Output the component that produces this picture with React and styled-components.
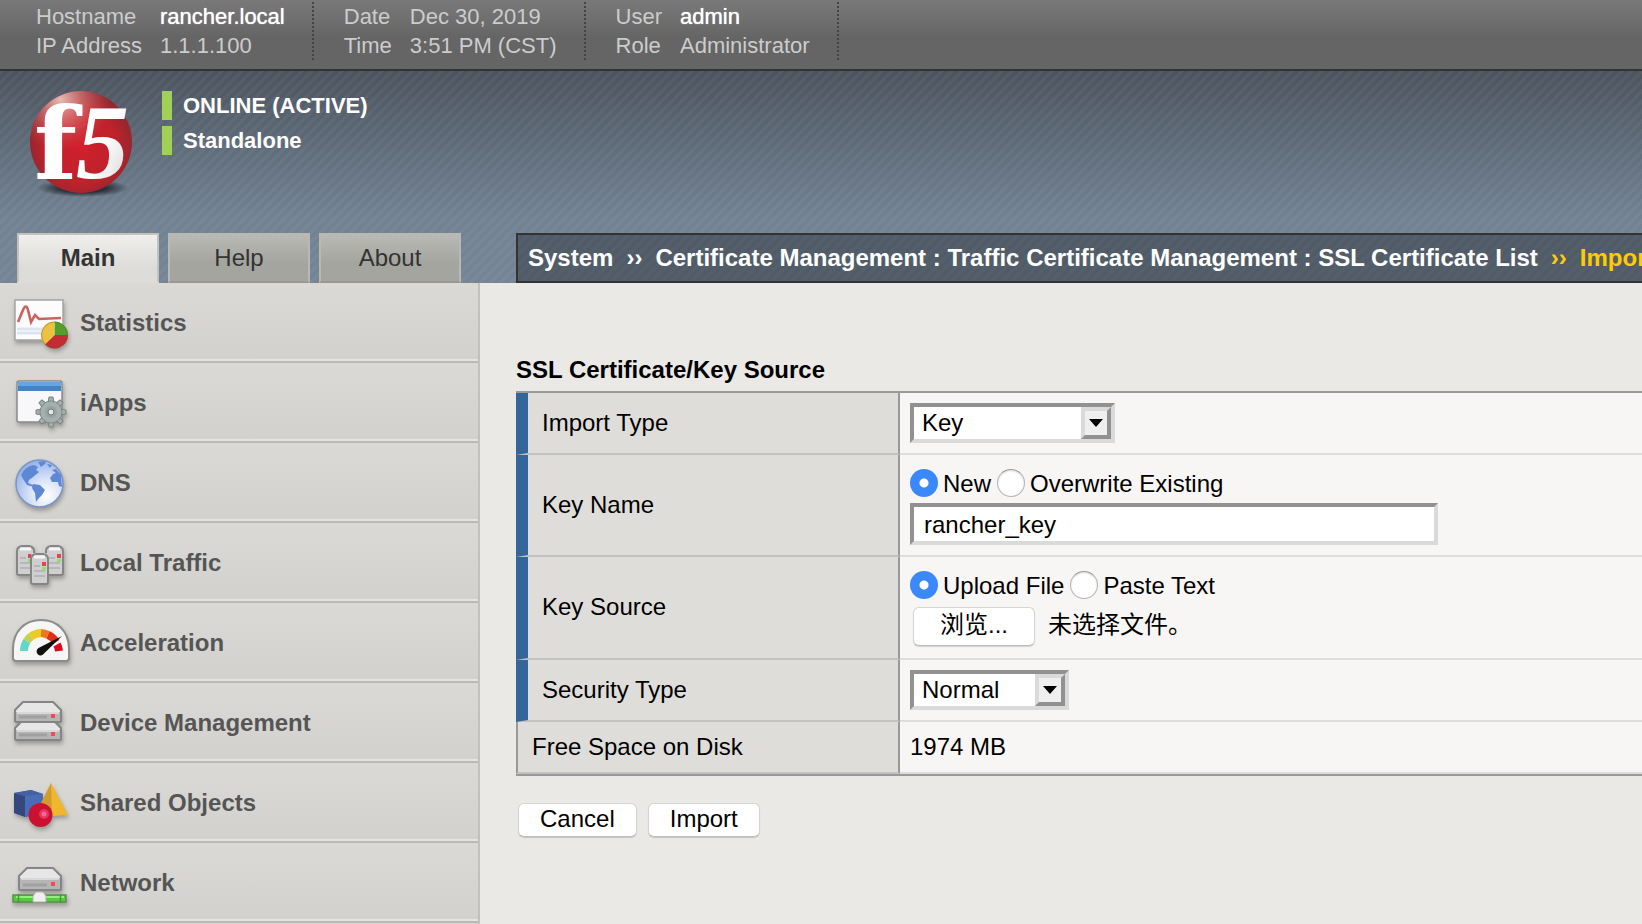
import React, { useRef, useState } from "react";
import styled, { createGlobalStyle, css } from "styled-components";

const GlobalStyle = createGlobalStyle`
  * { box-sizing: border-box; }
  body {
    margin: 0;
    background: #eae9e5;
    color: #000;
    font-family: "Liberation Sans", Arial, "Noto Sans CJK SC", sans-serif;
    font-size: 24px;
    line-height: 27px;
  }
  button, input, select { font: inherit; color: inherit; margin: 0; }
`;

const Page = styled.div`
  min-height: 100vh;
  display: flex;
  flex-direction: column;
  overflow: hidden;
`;

/* ---------- Top information bar ---------- */

const InfoBar = styled.div`
  display: flex;
  padding: 2px 0 9px 6px;
  border-bottom: 2px solid #333;
  background: linear-gradient(#797979, #656565 55%, #656565);
  color: #ccc;
  font-size: 22px;
  line-height: 29px;
  white-space: nowrap;
`;

const InfoGroup = styled.dl`
  display: grid;
  grid-template-columns: auto auto;
  column-gap: 18px;
  margin: 0;
  padding: 0 29px 0 30px;
  background: repeating-linear-gradient(#444 0 2px, transparent 2px 4px) right top / 2px 100% no-repeat;
`;

const InfoTerm = styled.dt``;

const InfoValue = styled.dd`
  margin: 0;
  ${(p) => p.$strong && css`
    color: #fff;
    text-shadow: 0 0 1px #fff;
  `}
`;

/* ---------- Banner ---------- */

const Banner = styled.header`
  background:
    linear-gradient(135deg, rgba(255, 255, 255, 0.04) 25%, transparent 25% 50%, rgba(255, 255, 255, 0.04) 50% 75%, transparent 75%) 0 0 / 10px 10px,
    linear-gradient(#4b545e, #728293 70%, #748495);
`;

const Identity = styled.div`
  display: flex;
  align-items: flex-start;
  gap: 22px;
  height: 162px;
  padding: 20px 0 0 22px;
`;

const StatusList = styled.ul`
  display: grid;
  gap: 6px;
  margin: 0;
  padding: 0;
  list-style: none;
`;

const Status = styled.li`
  padding-left: 11px;
  border-left: 10px solid #a0d055;
  color: #fff;
  font-size: 22px;
  font-weight: bold;
  line-height: 29px;
`;

const TitleRow = styled.div`
  display: flex;
  height: 50px;
`;

const Tabs = styled.nav`
  display: flex;
  flex: none;
  gap: 9px;
  width: 516px;
  padding-left: 17px;
`;

const Tab = styled.button`
  width: 142px;
  padding: 0 0 2px;
  border: 2px solid #b8b8b5;
  border-bottom-color: #999994;
  background: linear-gradient(#b9b9b5, #a5a5a0 60%);
  color: #333;
  ${(p) => p.$active && css`
    border-color: #c3c2bf;
    border-bottom-color: #dddcd8;
    background: linear-gradient(#f0efed, #dddcd8 70%);
    font-weight: bold;
  `}
`;

const Breadcrumb = styled.nav`
  display: flex;
  align-items: center;
  flex: 1;
  gap: 13px;
  min-width: 0;
  padding: 0 0 2px 10px;
  border: 2px solid #333;
  border-right: 0;
  overflow: hidden;
  background: rgba(0, 0, 0, 0.3);
  color: #fff;
  font-weight: bold;
  white-space: nowrap;
`;

const Crumb = styled.span`
  color: ${(p) => (p.$current ? "#fc0" : "#fff")};
`;

/* ---------- Side navigation ---------- */

const Body = styled.div`
  display: flex;
  flex: 1;
`;

const SideNav = styled.nav`
  flex: none;
  width: 480px;
  border-right: 2px solid #c2c1be;
  background: #dad9d5;
`;

const NavItem = styled.a`
  display: flex;
  align-items: flex-start;
  height: 80px;
  border-bottom: 2px solid #b9b9b7;
  box-shadow: inset 0 -2px #e4e3e0;
  background: linear-gradient(#dad9d5, #d2d1cd);
  color: #555;
  font-weight: bold;
  text-decoration: none;
`;

const NavLabel = styled.span`
  padding-top: 26px;
`;

const NavIcon = styled.svg`
  flex: none;
  width: 80px;
  height: 76px;
  filter: drop-shadow(1px 3px 2px rgba(0, 0, 0, 0.28));
`;

/* ---------- Form ---------- */

const Main = styled.main`
  flex: 1;
  min-width: 0;
  padding: 73px 0 32px 36px;
`;

const SectionTitle = styled.h2`
  margin: 0 0 8px;
  font-size: 24px;
  line-height: 27px;
`;

const FormTable = styled.table`
  width: 100%;
  border-top: 2px solid #999;
  border-bottom: 2px solid #999;
  border-spacing: 0;
`;

const HeadCell = styled.th`
  width: 384px;
  padding: 9px 14px 11px;
  border-left: ${(p) => (p.$plain ? "2px solid #999" : "12px solid #369")};
  border-right: 2px solid #999;
  border-bottom: 2px solid #c3c2be;
  background: #dedddA;
  font-weight: normal;
  text-align: left;
`;

const ValueCell = styled.td`
  height: ${(p) => (p.$plain ? 52 : 62)}px;
  padding: ${(p) => (p.$plain ? "0 10px 2px" : "10px")};
  border-bottom: 2px solid #dddddb;
  background: #f7f6f4;
`;

const sunken = css`
  border: 4px solid;
  border-color: #919191 #dadada #dadada #919191;
  background: #fff;
`;

const SelectBox = styled.span`
  ${sunken}
  display: grid;
  width: ${(p) => p.$width}px;
  height: 40px;
`;

const NativeSelect = styled.select`
  grid-area: 1 / 1;
  width: 100%;
  padding: 0 30px 2px 8px;
  border: 0;
  border-radius: 0;
  outline: 0;
  background: #fff;
  appearance: none;
`;

const SelectArrow = styled.span`
  grid-area: 1 / 1;
  display: grid;
  place-items: center;
  justify-self: end;
  width: 30px;
  border: 4px solid;
  border-color: #dadada #919191 #919191 #dadada;
  background: #efefef;
  pointer-events: none;
`;

const TextInput = styled.input`
  ${sunken}
  display: block;
  width: 528px;
  height: 42px;
  padding: 2px 10px 0;
  outline: 0;
`;

const RadioRow = styled.div`
  display: flex;
  gap: 6px;
  height: 36px;
  margin-bottom: 2px;
`;

const RadioLabel = styled.label`
  display: flex;
  align-items: center;
  gap: 5px;
`;

const Radio = styled.input`
  width: 28px;
  height: 28px;
  border: 1px solid #b5b5b5;
  border-top-color: #999;
  border-radius: 50%;
  background: #fff;
  box-shadow: inset 0 1px 2px rgba(0, 0, 0, 0.15);
  appearance: none;
  &:checked {
    border: 0;
    background: radial-gradient(circle, #fff 0 4px, #3b88fd 5px);
    box-shadow: none;
  }
`;

const FileRow = styled.div`
  display: flex;
  align-items: center;
  gap: 13px;
  height: 43px;
  padding-left: 3px;
`;

const PushButton = styled.button`
  height: ${(p) => (p.$tall ? 39 : 34)}px;
  padding: ${(p) => (p.$tall ? "0 26px 4px" : "0 21px 4px")};
  border: 1px solid #d4d4d2;
  border-bottom-color: #bdbdbb;
  border-radius: 6px;
  background: #fff;
  box-shadow: 0 1px 1px rgba(0, 0, 0, 0.15);
  white-space: nowrap;
`;

const FileStatus = styled.span`
  padding-bottom: 4px;
`;

const Actions = styled.div`
  display: flex;
  gap: 11px;
  padding: 27px 0 0 2px;
`;

/* ---------- Drawings ---------- */

const F5Logo = () => (
  <svg width="118" height="112" viewBox="22 91 118 112" overflow="visible" role="img" aria-label="f5">
    <defs>
      <radialGradient id="ball" cx="0.5" cy="0.55" r="0.6">
        <stop offset="0" stopColor="#d0202c" />
        <stop offset="0.6" stopColor="#bd222c" />
        <stop offset="1" stopColor="#7c2a30" />
      </radialGradient>
      <radialGradient id="shine" cx="0.3" cy="0.08" r="0.5">
        <stop offset="0" stopColor="#f6d5cc" stopOpacity="0.85" />
        <stop offset="1" stopColor="#e06060" stopOpacity="0" />
      </radialGradient>
      <radialGradient id="ground">
        <stop offset="0.5" stopColor="#1d2228" stopOpacity="0.85" />
        <stop offset="1" stopColor="#1d2228" stopOpacity="0" />
      </radialGradient>
      <linearGradient id="letter" x1="0" y1="0" x2="1" y2="1">
        <stop offset="0.5" stopColor="#fff" />
        <stop offset="1" stopColor="#cfcfcf" />
      </linearGradient>
    </defs>
    <ellipse cx="83" cy="188" rx="46" ry="9" fill="url(#ground)" />
    <circle cx="81" cy="142" r="51" fill="url(#ball)" />
    <circle cx="81" cy="142" r="51" fill="url(#shine)" />
    <text x="34" y="179" fontFamily="DejaVu Serif" fontWeight="bold" fontSize="100" fill="#fff">f</text>
    <text x="76" y="178" fontFamily="Liberation Serif" fontWeight="bold" fontStyle="italic" fontSize="106" fill="url(#letter)">5</text>
  </svg>
);

const ArrowDown = () => (
  <svg width="14" height="8" viewBox="0 0 14 8" aria-hidden="true">
    <path d="M0 0h14L7 8z" fill="#000" />
  </svg>
);

const StatisticsIcon = () => (
  <NavIcon viewBox="0 0 80 76" aria-hidden="true">
    <rect x="15" y="17" width="48" height="40" fill="#fcfcfc" stroke="#a5a5a5" strokeWidth="1.5" />
    <path d="M17 46h44M17 50h44" stroke="#dbe5ef" strokeWidth="3" />
    <path d="M18 39l5-12q3-7 5 0l3 12 4-7 4 4 22-1" fill="none" stroke="#cc6260" strokeWidth="2.6" />
    <path d="M54.500 52V38.500A13.500 13.500 0 0 1 68 52z" fill="#4fa02c" />
    <path d="M54.500 52H68A13.500 13.500 0 0 1 45 61.500z" fill="#c42c34" />
    <path d="M54.500 52L45 61.500A13.500 13.500 0 0 1 54.500 38.500z" fill="#ecc040" />
    <circle cx="54.500" cy="52" r="13" fill="none" stroke="#6d5a20" strokeOpacity="0.4" />
  </NavIcon>
);

const gearTeeth = [0, 45, 90, 135, 180, 225, 270, 315];

const IAppsIcon = () => (
  <NavIcon viewBox="0 0 80 76" aria-hidden="true">
    <rect x="17" y="18" width="45" height="41" rx="2" fill="#f8f8fa" stroke="#8b8b8b" strokeWidth="1.5" />
    <path d="M18 19h43v9H18z" fill="#4384c8" />
    <path d="M18 19h43v4H18z" fill="#68a5e0" />
    <g fill="#a5afad" stroke="#7b8583" strokeWidth="1">
      {gearTeeth.map((a) => (
        <path key={a} d="M48 40l1-6h4l1 6z" transform={`rotate(${a} 51 49)`} />
      ))}
      <circle cx="51" cy="49" r="11" />
    </g>
    <circle cx="51" cy="49" r="10.400" fill="#a5afad" />
    <circle cx="51" cy="49" r="6" fill="#98a3a1" />
    <circle cx="51" cy="49" r="3" fill="#e4e5e2" stroke="#707b79" />
  </NavIcon>
);

const DnsIcon = () => (
  <NavIcon viewBox="0 0 80 76" aria-hidden="true">
    <defs>
      <radialGradient id="sea" cx="0.65" cy="0.75" r="0.75">
        <stop offset="0" stopColor="#fff" />
        <stop offset="0.5" stopColor="#d5e0f8" />
        <stop offset="1" stopColor="#98b5ea" />
      </radialGradient>
    </defs>
    <circle cx="39.500" cy="40.500" r="23.500" fill="url(#sea)" stroke="#7d94c4" strokeWidth="1.500" />
    <g fill="#5f88d4">
      <path d="M21 32q4-9 13-10l4 2-2 3 3 2-6 5-4 3-1 3 5 2 1 2-7-2-4-6z" />
      <path d="M38 19l6-1 2 2-5 4zM47 21l5 1-2 3z" />
      <path d="M33 41l7 1 5 5-3 5-3 3-3 4-1-9-3-5z" />
      <path d="M52 27l4-1 5 6 1 12-3-1-1-4-6 0-2-4 3-4 3-1z" />
    </g>
  </NavIcon>
);

const Tower = ({ x, y, w, h }) => (
  <g>
    <rect x={x} y={y} width={w} height={h} rx="3" fill="#d0d0d0" />
    <path
      d={`M${x} ${y + 6}q0-4 5-5h${w - 10}q5 1 5 5v${h - 8}q0 2-2 2h${4 - w}q-2 0-2-2z`}
      fill="#cfcfcf" stroke="#858585" strokeWidth="2"
    />
    <path d={`M${x + 3} ${y + 4}h${w - 6}`} stroke="#f4f4f4" strokeWidth="3" />
    <path d={`M${x + 3} ${y + 13}h6M${x + 3} ${y + 18}h11M${x + 3} ${y + 23}h11`} stroke="#b0b0b0" strokeWidth="1.500" />
    <rect x={x + w - 6} y={y + 9} width="4" height="4" fill="#e8404c" />
    <rect x={x + w - 6} y={y + 14} width="4" height="3" fill="#8edf6c" />
  </g>
);

const LocalTrafficIcon = () => (
  <NavIcon viewBox="0 0 80 76" aria-hidden="true">
    <Tower x={17} y={22} w={17} h={30} />
    <Tower x={46} y={22} w={17} h={30} />
    <Tower x={31} y={30} w={17} h={31} />
  </NavIcon>
);

const AccelerationIcon = () => (
  <NavIcon viewBox="0 0 80 76" aria-hidden="true">
    <path d="M13 56V46C13 28 25 17 41 17s28 11 28 29v10l-2 2H15z" fill="#f6f6f4" stroke="#8c8c8c" strokeWidth="2" />
    <g fill="none" strokeWidth="8">
      <path d="M24 48A17.500 17.500 0 0 1 27 38" stroke="#65d5c8" />
      <path d="M27 38A17.500 17.500 0 0 1 31 33.500" stroke="#c8d050" />
      <path d="M31 33.500A17.500 17.500 0 0 1 41 30" stroke="#edcb22" />
      <path d="M41 30A17.500 17.500 0 0 1 48 31.800" stroke="#ea7a20" />
      <path d="M48 31.800A17.500 17.500 0 0 1 56 39" stroke="#e03018" />
      <path d="M57 41.500A17.500 17.500 0 0 1 59 48" stroke="#e00820" />
    </g>
    <path d="M38.500 45L62 33 44 50.500a4 4 0 1 1-5.500-5.500z" fill="#111" />
  </NavIcon>
);

const Server = ({ x, y, w, h }) => (
  <g>
    <path
      d={`M${x} ${y + 8}l8-8h${w - 16}l8 8v${h - 9}l-1 1h${2 - w}l-1-1z`}
      fill="#e6e6e6" stroke="#858585" strokeWidth="2" strokeLinejoin="round"
    />
    <path d={`M${x + 1} ${y + 10}h${w - 2}v${h - 11}h${2 - w}z`} fill="#b5b5b5" />
    <path d={`M${x + 2} ${y + 11}h${w - 4}`} stroke="#d8d8d8" strokeWidth="2" />
    <path d={`M${x + 4} ${y + h - 5}h${w - 18}`} stroke="#a0a0a0" strokeWidth="3" />
    <rect x={x + w - 10} y={y + h - 8} width="4" height="4" fill="#ef4b55" />
  </g>
);

const DeviceIcon = () => (
  <NavIcon viewBox="0 0 80 76" aria-hidden="true">
    <Server x={15} y={37} w={46} h={20} />
    <Server x={15} y={19} w={46} h={20} />
  </NavIcon>
);

const SharedObjectsIcon = () => (
  <NavIcon viewBox="0 0 80 76" aria-hidden="true">
    <path d="M14 30l17-3 12 4v19L26 54l-12-4z" fill="#4a6cb4" />
    <path d="M14 30l11 3v21l-11-4z" fill="#35487e" />
    <path d="M14 30l17-3 12 4-18 2z" fill="#4560a0" />
    <path d="M51 20l17 32-16 1-9-12z" fill="#f0b72e" />
    <path d="M51 20l1 33-10-4-1-9z" fill="#d29c2c" />
    <circle cx="40.500" cy="52" r="12" fill="#cc1030" />
    <circle cx="44" cy="51" r="5" fill="#e23560" />
    <circle cx="44" cy="51" r="2.500" fill="#f06a94" />
  </NavIcon>
);

const NetworkIcon = () => (
  <NavIcon viewBox="0 0 80 76" aria-hidden="true">
    <path d="M13 52h53v7H13z" fill="#52cc38" stroke="#5d8f52" strokeWidth="1.500" />
    <path d="M16 54h48" stroke="#8ff07a" strokeWidth="2" />
    <path d="M18.500 51v9M60.500 51v9" stroke="#4f9443" strokeWidth="1.500" />
    <path d="M33 59v-6l3-4h7l3 4v6z" fill="#efefef" stroke="#b0b0b0" />
    <Server x={19} y={25} w={42} h={22} />
  </NavIcon>
);

const navItems = [
  ["Statistics", StatisticsIcon],
  ["iApps", IAppsIcon],
  ["DNS", DnsIcon],
  ["Local Traffic", LocalTrafficIcon],
  ["Acceleration", AccelerationIcon],
  ["Device Management", DeviceIcon],
  ["Shared Objects", SharedObjectsIcon],
  ["Network", NetworkIcon],
];

const infoGroups = [
  [["Hostname", "rancher.local", true], ["IP Address", "1.1.1.100"]],
  [["Date", "Dec 30, 2019"], ["Time", "3:51 PM (CST)"]],
  [["User", "admin", true], ["Role", "Administrator"]],
];

const Dropdown = ({ id, width, options }) => (
  <SelectBox $width={width}>
    <NativeSelect id={id}>
      {options.map((o) => <option key={o}>{o}</option>)}
    </NativeSelect>
    <SelectArrow><ArrowDown /></SelectArrow>
  </SelectBox>
);

const RadioGroup = ({ name, label, options }) => {
  const [value, setValue] = useState(options[0]);
  return (
    <RadioRow role="radiogroup" aria-label={label}>
      {options.map((o) => (
        <RadioLabel key={o}>
          <Radio type="radio" name={name} checked={value === o} onChange={() => setValue(o)} />
          {o}
        </RadioLabel>
      ))}
    </RadioRow>
  );
};

const FilePicker = ({ id }) => {
  const input = useRef(null);
  const [file, setFile] = useState("");
  return (
    <FileRow>
      <input id={id} ref={input} type="file" hidden onChange={(e) => setFile(e.target.files[0]?.name || "")} />
      <PushButton type="button" $tall onClick={() => input.current.click()}>浏览...</PushButton>
      <FileStatus>{file || "未选择文件。"}</FileStatus>
    </FileRow>
  );
};

export default function App() {
  const [tab, setTab] = useState("Main");
  return (
    <Page lang="zh-CN">
      <GlobalStyle />
      <InfoBar>
        {infoGroups.map((rows) => (
          <InfoGroup key={rows[0][0]}>
            {rows.map(([term, value, strong]) => (
              <React.Fragment key={term}>
                <InfoTerm>{term}</InfoTerm>
                <InfoValue $strong={strong}>{value}</InfoValue>
              </React.Fragment>
            ))}
          </InfoGroup>
        ))}
      </InfoBar>

      <Banner>
        <Identity>
          <F5Logo />
          <StatusList>
            <Status>ONLINE (ACTIVE)</Status>
            <Status>Standalone</Status>
          </StatusList>
        </Identity>
        <TitleRow>
          <Tabs>
            {["Main", "Help", "About"].map((t) => (
              <Tab key={t} type="button" $active={t === tab} onClick={() => setTab(t)}>{t}</Tab>
            ))}
          </Tabs>
          <Breadcrumb aria-label="Breadcrumb">
            <Crumb>System</Crumb>
            <Crumb>››</Crumb>
            <Crumb>Certificate Management : Traffic Certificate Management : SSL Certificate List</Crumb>
            <Crumb $current>››</Crumb>
            <Crumb $current>Import</Crumb>
          </Breadcrumb>
        </TitleRow>
      </Banner>

      <Body>
        <SideNav>
          {navItems.map(([label, Icon]) => (
            <NavItem key={label} href="#">
              <Icon />
              <NavLabel>{label}</NavLabel>
            </NavItem>
          ))}
        </SideNav>

        <Main>
          <form onSubmit={(e) => e.preventDefault()}>
            <SectionTitle>SSL Certificate/Key Source</SectionTitle>
            <FormTable>
              <tbody>
                <tr>
                  <HeadCell scope="row"><label htmlFor="import-type">Import Type</label></HeadCell>
                  <ValueCell><Dropdown id="import-type" width={205} options={["Key", "Certificate"]} /></ValueCell>
                </tr>
                <tr>
                  <HeadCell scope="row"><label htmlFor="key-name">Key Name</label></HeadCell>
                  <ValueCell>
                    <RadioGroup name="name-mode" label="Key Name" options={["New", "Overwrite Existing"]} />
                    <TextInput id="key-name" type="text" defaultValue="rancher_key" />
                  </ValueCell>
                </tr>
                <tr>
                  <HeadCell scope="row"><label htmlFor="key-file">Key Source</label></HeadCell>
                  <ValueCell>
                    <RadioGroup name="source-mode" label="Key Source" options={["Upload File", "Paste Text"]} />
                    <FilePicker id="key-file" />
                  </ValueCell>
                </tr>
                <tr>
                  <HeadCell scope="row"><label htmlFor="security-type">Security Type</label></HeadCell>
                  <ValueCell><Dropdown id="security-type" width={159} options={["Normal", "Password"]} /></ValueCell>
                </tr>
                <tr>
                  <HeadCell scope="row" $plain>Free Space on Disk</HeadCell>
                  <ValueCell $plain>1974 MB</ValueCell>
                </tr>
              </tbody>
            </FormTable>
            <Actions>
              <PushButton type="button">Cancel</PushButton>
              <PushButton type="submit">Import</PushButton>
            </Actions>
          </form>
        </Main>
      </Body>
    </Page>
  );
}
